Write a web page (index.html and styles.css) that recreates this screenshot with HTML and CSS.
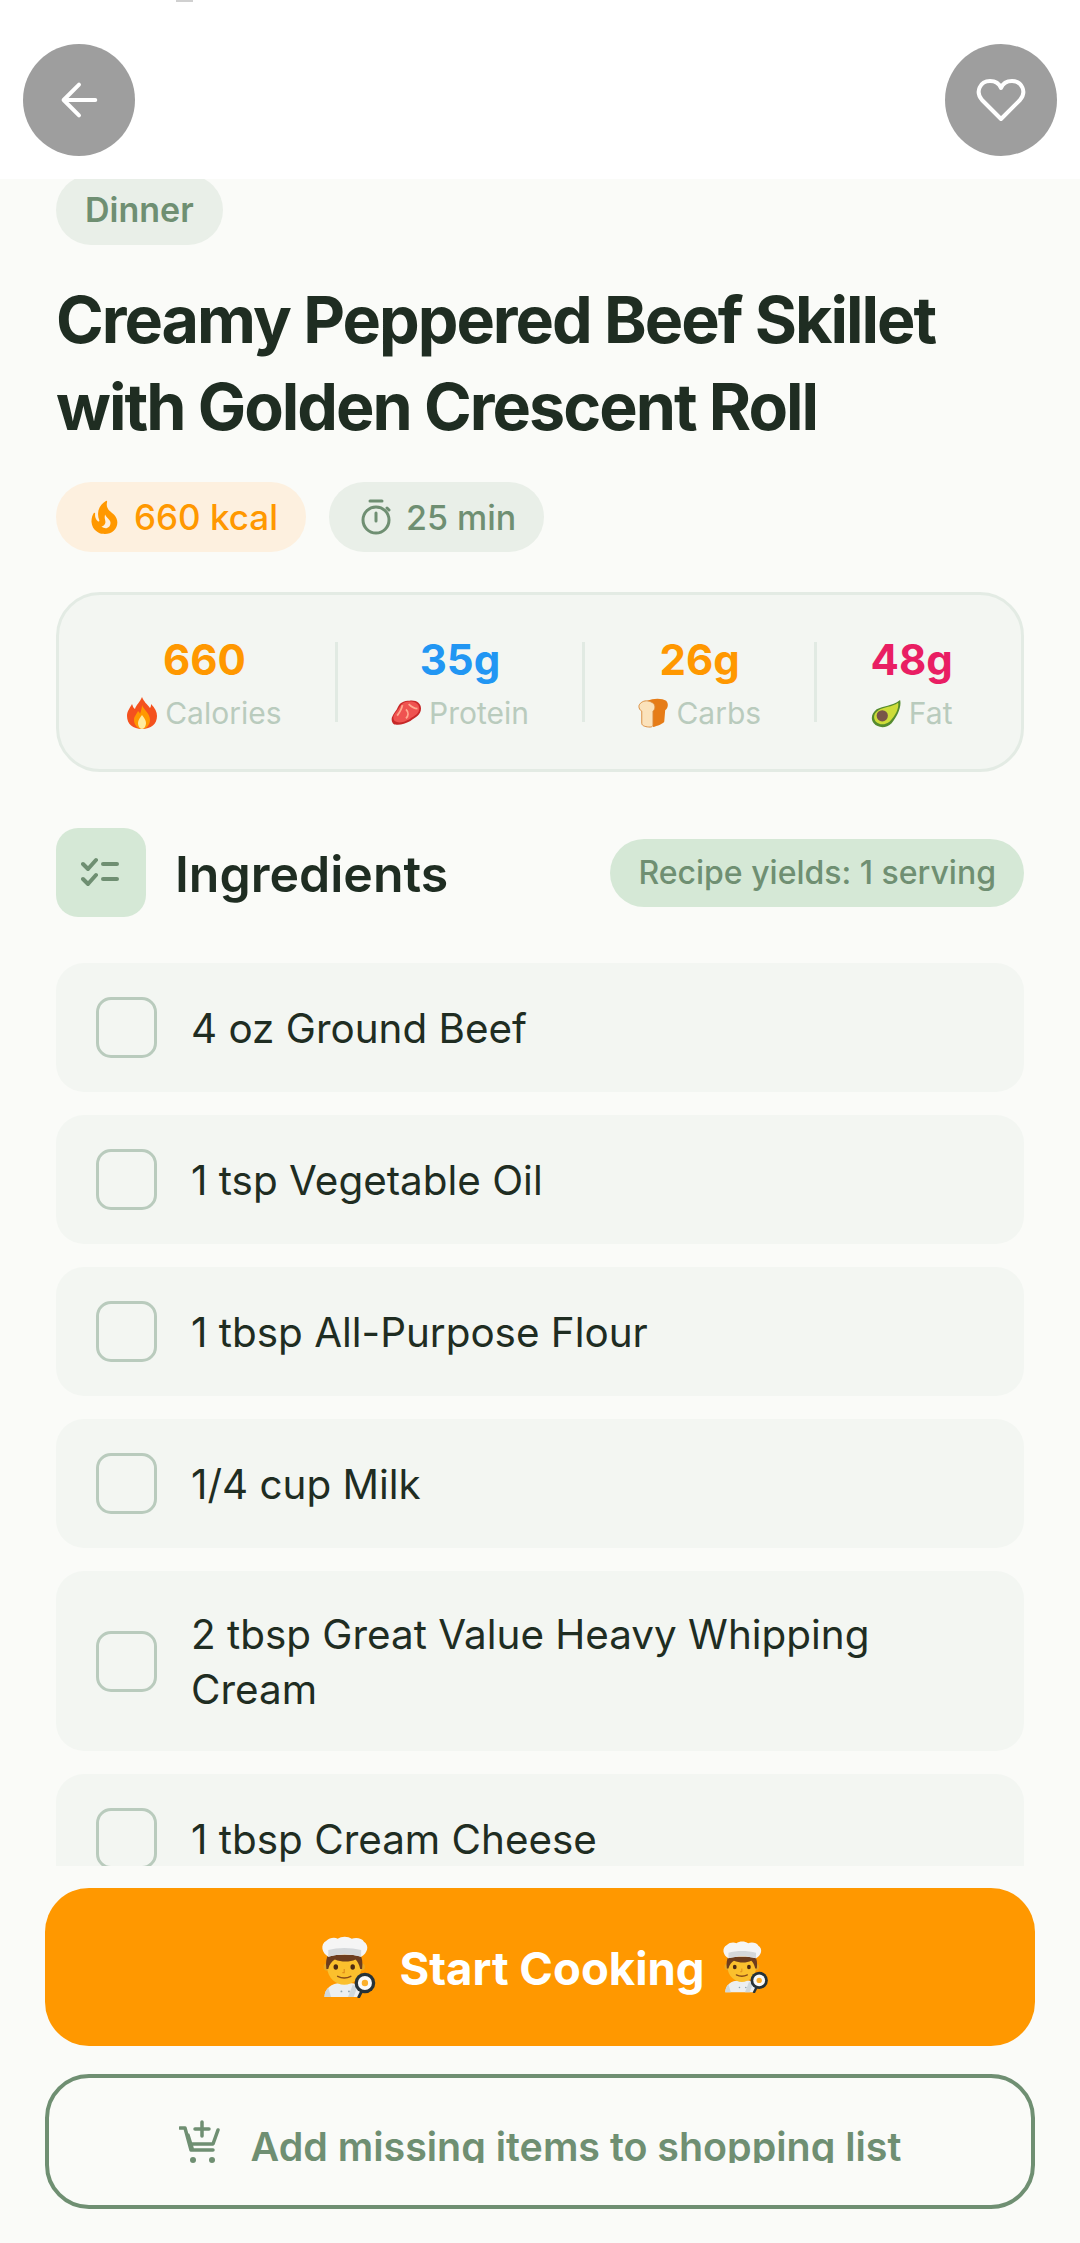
FILE: index.html
```html
<!DOCTYPE html>
<html lang="en">
<head>
  <meta charset="UTF-8">
  <meta name="viewport" content="width=device-width, initial-scale=1.0">
  <title>Creamy Peppered Beef Skillet</title>
  <link rel="stylesheet" href="styles.css">
</head>
<body>

  <svg class="defs" viewBox="0 0 64 64">
    <symbol id="cook" viewBox="0 0 66 66">
      <path d="M8 65c0-9 7-15 18-15h8c8 0 13 3 15 8l-5 7z" fill="#eceff1"/>
      <path d="M8 65c0-4 1-7 4-10l3 10zM38 52l5 2-4 11h-6z" fill="#cfd8dc"/>
      <circle cx="26" cy="59" r="1" fill="#90a4ae"/><circle cx="34" cy="59" r="1" fill="#90a4ae"/>
      <circle cx="11" cy="33" r="4" fill="#e9a825"/><circle cx="47" cy="33" r="4" fill="#e9a825"/>
      <path d="M11 22h36v12c0 10-9 18-18 18s-18-8-18-18z" fill="#fbc02d"/>
      <path d="M10 35c-1-7 0-12 2-15h34c2 3 3 8 2 15h-2c-1-5-3-8-5-10-6 3-15 3-22 0-3 2-6 5-7 10z" fill="#6d3d1e"/>
      <ellipse cx="20" cy="33" rx="2.4" ry="2.8" fill="#4e2a12"/><ellipse cx="38" cy="33" rx="2.4" ry="2.8" fill="#4e2a12"/>
      <path d="M29 35v4h-2" fill="none" stroke="#e08e1b" stroke-width="1.2"/>
      <path d="M22 43c4 2 10 2 14 0" fill="none" stroke="#8a4b17" stroke-width="1.6" stroke-linecap="round"/>
      <path d="M12 22C5 18 3 9 10 5c3-3 9-4 12-2 4-3 11-3 15 0 4-2 11-1 13 3 6 4 4 12-3 16-11-3-24-3-35 0z" fill="#f5f5f5"/>
      <path d="M12 15c10-3 24-3 35 0v7c-11-3-24-3-35 0z" fill="#d5d8da"/>
      <path d="M48 58l-4 8" stroke="#263238" stroke-width="3"/>
      <circle cx="51" cy="50" r="11" fill="#263238"/>
      <circle cx="51" cy="50" r="7.5" fill="#fafafa"/>
      <circle cx="51" cy="50" r="3.4" fill="#fbb02d"/>
    </symbol>
  </svg>

  <div class="top-mark"></div>

  <header class="topbar">
    <button class="round-btn" aria-label="Back">
      <svg width="38" height="38" viewBox="0 0 42 42" fill="none" stroke="#fff" stroke-width="4.4" stroke-linecap="round" stroke-linejoin="round">
        <path d="M39 21H4M21 4L4 21l17 17"/>
      </svg>
    </button>
    <button class="round-btn" aria-label="Favourite">
      <svg width="50" height="44" viewBox="0 0 50 44" fill="none" stroke="#fff" stroke-width="4" stroke-linejoin="round">
        <path d="M25 41L6 22C-1 14 4 3 14 3c5 0 9 2 11 7 2-5 6-7 11-7 10 0 15 11 8 19z"/>
      </svg>
    </button>
  </header>

  <main class="scroller">
    <span class="tag">Dinner</span>
    <h1>Creamy Peppered Beef Skillet with Golden Crescent Roll</h1>

    <div class="pills">
      <span class="pill pill-kcal">
        <svg width="28" height="34" viewBox="3.5 1 16.5 21"><path fill="#ff9800" d="M19.48 12.35c-1.57-4.08-7.16-4.3-5.81-10.23.1-.44-.37-.78-.75-.55C9.29 3.71 6.68 8 8.87 13.62c.18.46-.36.89-.75.59-1.81-1.37-2-3.34-1.84-4.75.06-.52-.62-.77-.91-.34C4.69 10.16 4 11.84 4 14.37c.38 5.6 5.11 7.32 6.81 7.54 2.43.31 5.06-.14 6.95-1.87 2.08-1.93 2.84-5.01 1.72-7.69zm-9.28 5.03c1.44-.35 2.18-1.39 2.38-2.31.33-1.43-.96-2.83-.09-5.09.33 1.87 3.27 3.04 3.27 5.08.08 2.53-2.66 4.7-5.56 2.32z"/></svg>
        660 kcal
      </span>
      <span class="pill pill-time">
        <svg width="32" height="36" viewBox="0 0 32 36" fill="none" stroke="#6f8f72" stroke-width="3" stroke-linecap="round">
          <circle cx="16" cy="21" r="13"/><path d="M10 2h12M16 14v8M27 9l2 2"/>
        </svg>
        25 min
      </span>
    </div>

    <section class="nutrition">
      <div class="stat">
        <div class="stat-value orange">660</div>
        <div class="stat-label">
          <svg class="emoji" viewBox="0 0 30 32"><path d="M15 0c2 5 5 7 8 11 1-1 1-3 1-4 4 4 6 8 6 12 0 8-6 13-15 13S0 27 0 19c0-5 3-8 5-12 1 2 1 4 3 5C9 8 13 5 15 0z" fill="#f4511e"/><path d="M15 8c1 4 8 8 8 15 0 5-4 9-8 9s-8-4-8-9c0-4 3-6 4-9 1 1 2 2 2 3 1-3 2-6 2-9z" fill="#ff9800"/><path d="M15 18c2 3 4 5 4 8s-2 6-4 6-4-3-4-6 2-5 4-8z" fill="#ffeb9e"/></svg>
          Calories
        </div>
      </div>
      <div class="stat">
        <div class="stat-value blue">35g</div>
        <div class="stat-label">
          <svg class="emoji" viewBox="0 0 34 30"><path d="M1 20C3 15 6 13 8 8c2-5 7-7 13-7 8-1 13 3 13 9 0 7-6 10-12 14-6 3-12 5-17 4-3 0-5-4-4-8z" fill="#c62828"/><path d="M3 18c2-4 5-6 7-10 2-4 6-6 11-6 7 0 11 3 11 8 0 6-5 8-11 12-6 3-11 5-15 3-3-1-4-4-3-7z" fill="#ef5350"/><path d="M13 6c-1 5-3 8-6 12M20 5c3 3 6 5 10 5M17 11c3 3 3 7 0 10" fill="none" stroke="#ffab91" stroke-width="2"/></svg>
          Protein
        </div>
      </div>
      <div class="stat">
        <div class="stat-value orange">26g</div>
        <div class="stat-label">
          <svg class="emoji" viewBox="0 0 32 32"><path d="M10 3C16 0 26 0 30 3c3 3 2 8-1 10l-1 12c0 2-8 5-12 6z" fill="#e67c17"/><path d="M1 9c0-3 4-6 8-6s10 3 9 7c0 2-1 3-2 4v14c0 2-1 3-3 3-4 0-9-1-9-4V14C2 13 1 11 1 9z" fill="#fbe2bb" stroke="#d98a3a"/></svg>
          Carbs
        </div>
      </div>
      <div class="stat">
        <div class="stat-value pink">48g</div>
        <div class="stat-label">
          <svg class="emoji" viewBox="0 0 32 32"><path d="M31 2C33 9 28 20 22 27c-6 6-15 5-19 0-4-5-2-11 3-15C13 8 22 9 31 2z" fill="#558b2f"/><path d="M29 5c1 6-3 14-9 20-5 4-11 4-15 0-3-4-2-9 3-12C14 9 22 10 29 5z" fill="#cddc39"/><circle cx="12" cy="19" r="6" fill="#795548"/></svg>
          Fat
        </div>
      </div>
    </section>

    <div class="section-head">
      <div class="section-icon">
        <svg width="40" height="32" viewBox="0 0 40 32" fill="none" stroke="#6f8f72" stroke-width="4" stroke-linecap="round" stroke-linejoin="round">
          <path d="M2 7l5 5 8-9M2 22l5 5 8-9M22 7h14M22 22h14"/>
        </svg>
      </div>
      <h2>Ingredients</h2>
      <span class="yield">Recipe yields: 1 serving</span>
    </div>

    <ul class="ingredients">
      <li><span class="check"></span><span class="item-text">4 oz Ground Beef</span></li>
      <li><span class="check"></span><span class="item-text">1 tsp Vegetable Oil</span></li>
      <li><span class="check"></span><span class="item-text">1 tbsp All-Purpose Flour</span></li>
      <li><span class="check"></span><span class="item-text">1/4 cup Milk</span></li>
      <li><span class="check"></span><span class="item-text">2 tbsp Great Value Heavy Whipping Cream</span></li>
      <li><span class="check"></span><span class="item-text">1 tbsp Cream Cheese</span></li>
    </ul>
  </main>

  <footer class="actions">
    <button class="btn-start">
      <svg class="cook-big"><use href="#cook"/></svg>
      <span class="btn-start-text">Start Cooking</span>
      <svg class="cook-small"><use href="#cook"/></svg>
    </button>
    <button class="btn-list">
      <svg width="42" height="44" viewBox="0 0 42 44" fill="none" stroke="#6f8f72" stroke-width="3.5" stroke-linecap="round" stroke-linejoin="round">
        <path d="M1 8h5l6 22h22M9 15l4 13 M39 10l-5 14H13M23 2v14M16 9h14"/>
        <circle cx="14" cy="40" r="3" fill="#6f8f72" stroke="none"/><circle cx="33" cy="40" r="3" fill="#6f8f72" stroke="none"/>
      </svg>
      <span class="btn-list-text">Add missing items to shopping list</span>
    </button>
  </footer>

</body>
</html>
```

FILE: styles.css
```css
* {
  box-sizing: border-box;
}
html, body {
  height: 100%;
}
body {
  position: relative;
  display: flex;
  flex-direction: column;
  width: 1080px;
  height: 2243px;
  margin: 0;
  overflow: hidden;
  background-color: #fafbf8;
  font-family: Inter, "Noto Sans", sans-serif;
  color: #1f2d22;
}
button {
  font-family: inherit;
  border: none;
  cursor: pointer;
}
.defs {
  display: none;
}
.top-mark {
  position: absolute;
  top: 0;
  left: 176px;
  width: 17px;
  height: 2px;
  background-color: #d0d0d0;
}

/* top bar */
.topbar {
  display: flex;
  flex: 0 0 179px;
  justify-content: space-between;
  padding: 44px 23px 0 23px;
  background-color: #fff;
}
.round-btn {
  display: flex;
  align-items: center;
  justify-content: center;
  width: 112px;
  height: 112px;
  padding: 0;
  background-color: #9e9e9e;
  border-radius: 50%;
}

/* scrolling part */
.scroller {
  flex: 0 0 1687px;
  padding: 0 56px;
  overflow: hidden;
}
.tag {
  display: inline-block;
  height: 70px;
  margin-top: -4px;
  padding: 0 29px;
  background-color: #e9efe8;
  border-radius: 35px;
  color: #6f8f72;
  font-size: 34px;
  font-weight: 600;
  line-height: 70px;
}
h1 {
  margin: 31px 0 32px;
  font-size: 64.6px;
  font-weight: 700;
  line-height: 87px;
  letter-spacing: -2px;
}
.pills {
  display: flex;
  gap: 23px;
}
.pill {
  display: flex;
  align-items: center;
  height: 70px;
  border-radius: 35px;
  font-weight: 500;
}
.pill-kcal {
  gap: 16px;
  padding: 0 28px 0 34px;
  background-color: #fdf0df;
  color: #ff9800;
  font-size: 35px;
}
.pill-time {
  gap: 14px;
  padding: 0 28px 0 31px;
  background-color: #e9efe8;
  color: #6f8f72;
  font-size: 34px;
}

/* nutrition card */
.nutrition {
  display: flex;
  align-items: center;
  height: 180px;
  margin-top: 40px;
  padding: 0 15px;
  background-color: #f3f6f2;
  border: 3px solid #e3ebe4;
  border-radius: 44px;
}
.stat {
  flex: 1 1 auto;
  height: 80px;
  border-right: 3px solid #e1eae3;
  text-align: center;
}
.stat:last-child {
  border-right: none;
}
.stat-value {
  margin-top: -2px;
  font-size: 42px;
  font-weight: 700;
  line-height: 40px;
}
.orange {
  color: #ff9800;
}
.blue {
  color: #2196f3;
}
.pink {
  color: #e91e63;
}
.stat-label {
  display: flex;
  align-items: center;
  justify-content: center;
  gap: 8px;
  margin-top: 16px;
  color: #b9cbbd;
  font-size: 30px;
  line-height: 34px;
}
.emoji {
  width: 30px;
  height: 32px;
}

/* ingredients */
.section-head {
  display: flex;
  align-items: center;
  height: 89px;
  margin-top: 56px;
}
.section-icon {
  display: flex;
  align-items: center;
  justify-content: center;
  width: 90px;
  height: 89px;
  background-color: #d5e8d6;
  border-radius: 22px;
}
h2 {
  flex: 1;
  margin: 0 0 0 29px;
  padding-top: 3px;
  font-size: 50px;
  font-weight: 600;
}
.yield {
  padding: 0 28px;
  background-color: #d5e8d6;
  border-radius: 34px;
  color: #6f8f72;
  font-size: 32px;
  font-weight: 500;
  line-height: 68px;
}
.ingredients {
  display: flex;
  flex-direction: column;
  gap: 23px;
  margin: 46px 0 0;
  padding: 0;
  list-style: none;
}
.ingredients li {
  display: flex;
  align-items: center;
  gap: 34px;
  padding: 34px 40px;
  background-color: #f3f6f2;
  border-radius: 28px;
  font-size: 40.4px;
  line-height: 55px;
}
.item-text {
  padding-top: 2px;
}
.check {
  flex: 0 0 61px;
  height: 61px;
  background-color: #f3f6f2;
  border: 3px solid #b9cbbd;
  border-radius: 15px;
}

/* bottom buttons */
.actions {
  display: flex;
  flex-direction: column;
  gap: 28px;
  padding: 22px 45px 0;
}
.btn-start {
  display: flex;
  align-items: center;
  justify-content: center;
  gap: 20px;
  height: 158px;
  padding-left: 14px;
  background-color: #ff9800;
  border-radius: 44px;
  color: #fff;
  font-size: 45.5px;
  font-weight: 700;
}
.btn-start-text {
  margin-top: 3px;
}
.cook-big {
  width: 62px;
  height: 62px;
}
.cook-small {
  width: 52px;
  height: 52px;
  margin-left: -6px;
}
.btn-list {
  display: flex;
  align-items: center;
  justify-content: center;
  gap: 30px;
  height: 135px;
  background-color: transparent;
  border: 4px solid #6f8f72;
  border-radius: 44px;
  color: #6f8f72;
  font-size: 39.4px;
  font-weight: 600;
}
.btn-list-text {
  display: block;
  height: 38px;
  margin-top: 4px;
  overflow: hidden;
  line-height: 44px;
}
```
